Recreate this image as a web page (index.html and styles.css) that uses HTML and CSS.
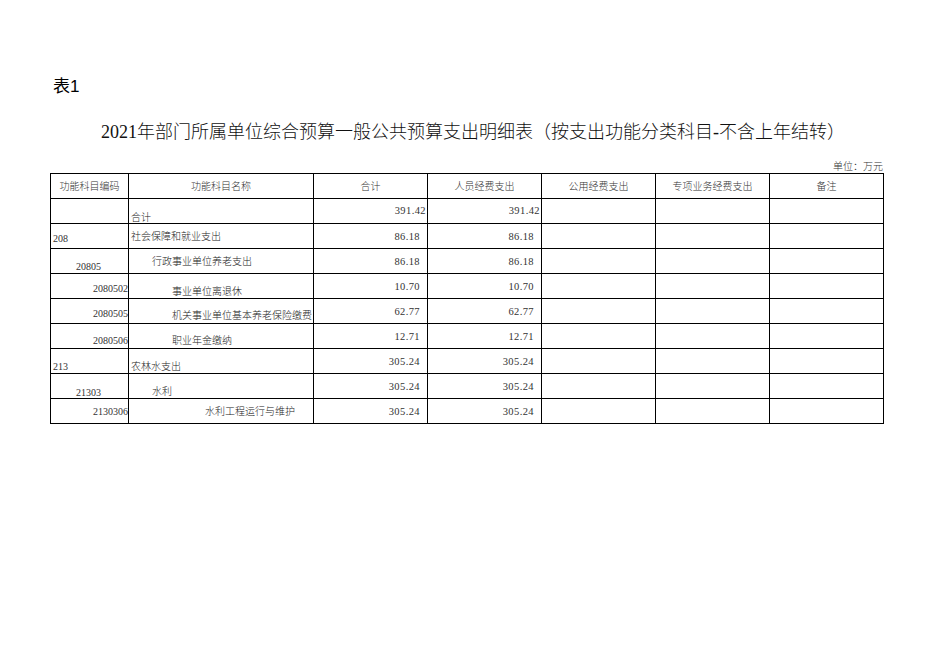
FILE: index.html
```
<!DOCTYPE html>
<html lang="zh">
<head>
<meta charset="utf-8">
<title>表1</title>
<link rel="stylesheet" href="styles.css">
</head>
<body>
<div class="page">
  <div class="biao">表1</div>
  <div class="title">2021年部门所属单位综合预算一般公共预算支出明细表（按支出功能分类科目-不含上年结转）</div>
  <div class="unit">单位：万元</div>
  <table class="grid">
    <colgroup>
      <col class="c1"><col class="c2"><col class="c3"><col class="c3"><col class="c3"><col class="c3"><col class="c3">
    </colgroup>
    <tr class="head">
      <td>功能科目编码</td><td>功能科目名称</td><td>合计</td><td>人员经费支出</td><td>公用经费支出</td><td>专项业务经费支出</td><td>备注</td>
    </tr>
    <tr>
      <td></td><td class="name l1 b0">合计</td><td class="num n1">391.42</td><td class="num n1">391.42</td><td></td><td></td><td></td>
    </tr>
    <tr>
      <td class="code left b4">208</td><td class="name l1 b5">社会保障和就业支出</td><td class="num">86.18</td><td class="num">86.18</td><td></td><td></td><td></td>
    </tr>
    <tr>
      <td class="code mid b1">20805</td><td class="name l2 b5">行政事业单位养老支出</td><td class="num">86.18</td><td class="num">86.18</td><td></td><td></td><td></td>
    </tr>
    <tr>
      <td class="code right b4">2080502</td><td class="name l3 b1">事业单位离退休</td><td class="num">10.70</td><td class="num">10.70</td><td></td><td></td><td></td>
    </tr>
    <tr>
      <td class="code right b4">2080505</td><td class="name l3 b2">机关事业单位基本养老保险缴费</td><td class="num">62.77</td><td class="num">62.77</td><td></td><td></td><td></td>
    </tr>
    <tr>
      <td class="code right b2">2080506</td><td class="name l3 b2">职业年金缴纳</td><td class="num">12.71</td><td class="num">12.71</td><td></td><td></td><td></td>
    </tr>
    <tr>
      <td class="code left b1">213</td><td class="name l1 b1">农林水支出</td><td class="num">305.24</td><td class="num">305.24</td><td></td><td></td><td></td>
    </tr>
    <tr>
      <td class="code mid b0">21303</td><td class="name l2 b1">水利</td><td class="num">305.24</td><td class="num">305.24</td><td></td><td></td><td></td>
    </tr>
    <tr>
      <td class="code right vm">2130306</td><td class="name l4 vm">水利工程运行与维护</td><td class="num">305.24</td><td class="num">305.24</td><td></td><td></td><td></td>
    </tr>
  </table>
</div>
</body>
</html>
```
FILE: styles.css
```
html, body {
  margin: 0;
  padding: 0;
  background: #ffffff;
}
.page {
  padding: 77px 0 0 50px;
  width: 834px;
  color: #1a1a1a;
  font-family: "Liberation Serif", "Noto Sans CJK SC", serif;
}
.biao {
  font-family: "Liberation Sans", "Noto Sans CJK SC", sans-serif;
  font-size: 17px;
  line-height: 20px;
  height: 20px;
  padding-left: 3px;
  color: #000;
}
.title {
  margin-top: 23px;
  font-size: 18px;
  line-height: 24px;
  height: 24px;
  padding-left: 51px;
  white-space: nowrap;
  color: #111;
  font-weight: 300;
}
.unit {
  margin-top: 17px;
  font-size: 10px;
  line-height: 12px;
  height: 12px;
  text-align: right;
  padding-right: 1px;
  color: #333;
  font-weight: 300;
}
.grid {
  border-collapse: collapse;
  table-layout: fixed;
  width: 834px;
  font-size: 10px;
  color: #222;
  font-weight: 300;
}
.c1 { width: 78px; }
.c2 { width: 185px; }
.c3 { width: 114px; }
.grid tr {
  height: 25px;
}
.grid td {
  box-sizing: border-box;
  border: 1px solid #000;
  height: 25px;
  padding: 0;
  line-height: 11px;
  white-space: nowrap;
  overflow: hidden;
  vertical-align: bottom;
}
.head td {
  text-align: center;
  vertical-align: middle;
  color: #333;
}
.num {
  text-align: right;
  vertical-align: middle !important;
  padding-right: 7px !important;
  font-size: 10.5px;
  letter-spacing: 0.4px;
  color: #333;
}
.n1 {
  padding-right: 1px !important;
  padding-bottom: 2px !important;
}
.code {
  color: #333;
}
.code.left { text-align: left; padding-left: 2px; }
.code.mid { text-align: center; padding-right: 2px; }
.code.right { text-align: right; padding-right: 0; }
.l1 { padding-left: 2px !important; }
.l2 { padding-left: 23px !important; }
.l3 { padding-left: 43px !important; }
.l4 { padding-left: 76px !important; }
.b0 { padding-bottom: 0 !important; }
.b1 { padding-bottom: 1px !important; }
.b2 { padding-bottom: 2px !important; }
.b4 { padding-bottom: 4px !important; }
.b5 { padding-bottom: 6px !important; }
.vm { vertical-align: middle !important; }
```
